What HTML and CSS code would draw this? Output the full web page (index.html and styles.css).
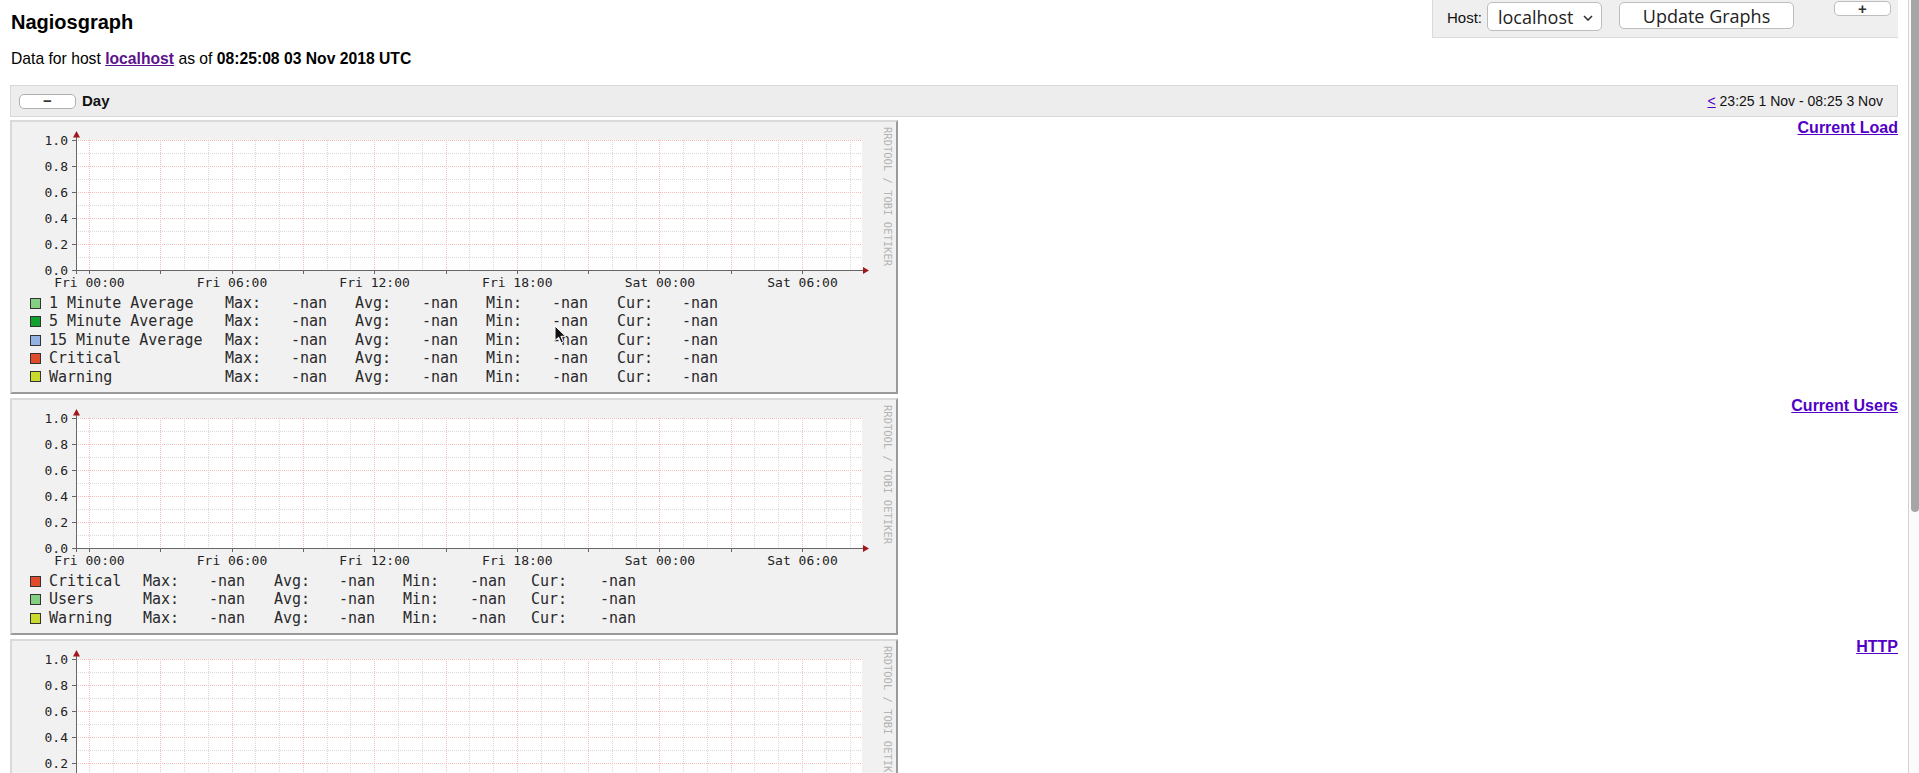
FILE: index.html
```html
<!DOCTYPE html>
<html lang="en">
<head>
<meta charset="utf-8">
<title>Nagiosgraph</title>
<link rel="stylesheet" href="styles.css">
</head>
<body>
<svg class="defs" width="0" height="0" aria-hidden="true">
  <defs>
    <symbol id="plotgrid" viewBox="0 0 884 170">
      <rect x="64" y="18" width="786" height="130" fill="#fff"/>
      <path class="grid-minor" d="M64 31.5H850M64 57.5H850M64 83.5H850M64 109.5H850M64 135.5H850M101.5 18V148M125.5 18V148M172.5 18V148M196.5 18V148M243.5 18V148M267.5 18V148M315.5 18V148M338.5 18V148M386.5 18V148M410.5 18V148M457.5 18V148M481.5 18V148M529.5 18V148M552.5 18V148M600.5 18V148M624.5 18V148M671.5 18V148M695.5 18V148M742.5 18V148M766.5 18V148M814.5 18V148M838.5 18V148"/>
      <path class="grid-major" d="M64 18.5H850M64 44.5H850M64 70.5H850M64 96.5H850M64 122.5H850M77.5 18V148M148.5 18V148M220.5 18V148M291.5 18V148M362.5 18V148M434.5 18V148M505.5 18V148M576.5 18V148M647.5 18V148M719.5 18V148M790.5 18V148"/>
      <path class="axis" d="M64.5 14V152M60 148.5H852M60 18.5H64M60 44.5H64M60 70.5H64M60 96.5H64M60 122.5H64M77.5 148V152M148.5 148V152M220.5 148V152M291.5 148V152M362.5 148V152M434.5 148V152M505.5 148V152M576.5 148V152M647.5 148V152M719.5 148V152M790.5 148V152"/>
      <path class="arrow" d="M64.5 9L61 15.5H68ZM857 148.5L851 145V152Z"/>
    </symbol>
  </defs>
</svg>

<header class="top">
  <div class="intro">
    <h1 class="title">Nagiosgraph</h1>
    <p class="summary">Data for host <a class="host-link" href="#">localhost</a> as of <b>08:25:08 03 Nov 2018 UTC</b></p>
  </div>
  <form class="controls">
    <label class="host-label">Host:</label>
    <button type="button" class="host-select">localhost
      <svg class="chev" width="10" height="6" viewBox="0 0 10 6"><path d="M1 1l4 4 4-4" fill="none" stroke="#333" stroke-width="1.6"/></svg>
    </button>
    <button type="button" class="update">Update Graphs</button>
    <button type="button" class="expand">+</button>
  </form>
</header>

<section class="period">
  <div class="period-bar">
    <button type="button" class="collapse">&minus;</button>
    <span class="period-name">Day</span>
    <span class="range"><a href="#" class="prev">&lt;</a> 23:25 1 Nov - 08:25 3 Nov</span>
  </div>

  <div class="graph-row">
    <div class="graph">
      <svg class="plot" width="884" height="170" viewBox="0 0 884 170">
        <use href="#plotgrid"/>
        <g class="ylab"><text x="56" y="22.8">1.0</text><text x="56" y="48.8">0.8</text><text x="56" y="74.8">0.6</text><text x="56" y="100.8">0.4</text><text x="56" y="126.8">0.2</text><text x="56" y="153">0.0</text></g>
        <g class="xlab"><text x="77.4" y="164.8">Fri 00:00</text><text x="220" y="164.8">Fri 06:00</text><text x="362.6" y="164.8">Fri 12:00</text><text x="505.3" y="164.8">Fri 18:00</text><text x="647.9" y="164.8">Sat 00:00</text><text x="790.5" y="164.8">Sat 06:00</text></g>
        <text class="brand" transform="translate(872 5) rotate(90)">RRDTOOL / TOBI OETIKER</text>
      </svg>
      <div class="legend legend-load">
        <div class="lg-row"><span class="sw sw-lgreen"></span><span>1 Minute Average</span><span>Max:</span><span>-nan</span><span>Avg:</span><span>-nan</span><span>Min:</span><span>-nan</span><span>Cur:</span><span>-nan</span></div>
        <div class="lg-row"><span class="sw sw-dgreen"></span><span>5 Minute Average</span><span>Max:</span><span>-nan</span><span>Avg:</span><span>-nan</span><span>Min:</span><span>-nan</span><span>Cur:</span><span>-nan</span></div>
        <div class="lg-row"><span class="sw sw-blue"></span><span>15 Minute Average</span><span>Max:</span><span>-nan</span><span>Avg:</span><span>-nan</span><span>Min:</span><span>-nan</span><span>Cur:</span><span>-nan</span></div>
        <div class="lg-row"><span class="sw sw-red"></span><span>Critical</span><span>Max:</span><span>-nan</span><span>Avg:</span><span>-nan</span><span>Min:</span><span>-nan</span><span>Cur:</span><span>-nan</span></div>
        <div class="lg-row"><span class="sw sw-yellow"></span><span>Warning</span><span>Max:</span><span>-nan</span><span>Avg:</span><span>-nan</span><span>Min:</span><span>-nan</span><span>Cur:</span><span>-nan</span></div>
      </div>
    </div>
    <a href="#" class="graph-title">Current Load</a>
  </div>

  <div class="graph-row">
    <div class="graph">
      <svg class="plot" width="884" height="170" viewBox="0 0 884 170">
        <use href="#plotgrid"/>
        <g class="ylab"><text x="56" y="22.8">1.0</text><text x="56" y="48.8">0.8</text><text x="56" y="74.8">0.6</text><text x="56" y="100.8">0.4</text><text x="56" y="126.8">0.2</text><text x="56" y="153">0.0</text></g>
        <g class="xlab"><text x="77.4" y="164.8">Fri 00:00</text><text x="220" y="164.8">Fri 06:00</text><text x="362.6" y="164.8">Fri 12:00</text><text x="505.3" y="164.8">Fri 18:00</text><text x="647.9" y="164.8">Sat 00:00</text><text x="790.5" y="164.8">Sat 06:00</text></g>
        <text class="brand" transform="translate(872 5) rotate(90)">RRDTOOL / TOBI OETIKER</text>
      </svg>
      <div class="legend legend-users">
        <div class="lg-row"><span class="sw sw-red"></span><span>Critical</span><span>Max:</span><span>-nan</span><span>Avg:</span><span>-nan</span><span>Min:</span><span>-nan</span><span>Cur:</span><span>-nan</span></div>
        <div class="lg-row"><span class="sw sw-lgreen"></span><span>Users</span><span>Max:</span><span>-nan</span><span>Avg:</span><span>-nan</span><span>Min:</span><span>-nan</span><span>Cur:</span><span>-nan</span></div>
        <div class="lg-row"><span class="sw sw-yellow"></span><span>Warning</span><span>Max:</span><span>-nan</span><span>Avg:</span><span>-nan</span><span>Min:</span><span>-nan</span><span>Cur:</span><span>-nan</span></div>
      </div>
    </div>
    <a href="#" class="graph-title">Current Users</a>
  </div>

  <div class="graph-row">
    <div class="graph graph-partial">
      <svg class="plot" width="884" height="170" viewBox="0 0 884 170">
        <use href="#plotgrid"/>
        <g class="ylab"><text x="56" y="22.8">1.0</text><text x="56" y="48.8">0.8</text><text x="56" y="74.8">0.6</text><text x="56" y="100.8">0.4</text><text x="56" y="126.8">0.2</text><text x="56" y="153">0.0</text></g>
        <text class="brand" transform="translate(872 5) rotate(90)">RRDTOOL / TOBI OETIKER</text>
      </svg>
    </div>
    <a href="#" class="graph-title">HTTP</a>
  </div>
</section>

<div class="scrollbar"><div class="thumb"></div></div>
<svg class="cursor" width="13" height="19" viewBox="0 0 13 19"><path d="M1 1V15.5L4.6 12.2L7.2 18L9.4 17L6.9 11.3H11.6Z" fill="#111" stroke="#fff" stroke-width="1"/></svg>
</body>
</html>
```

FILE: styles.css
```css
html,
body {
  height: 773px;
}

body {
  margin: 0 21px 0 10px;
  font-family: "Liberation Sans", Arial, sans-serif;
  color: #111;
  background: #fff;
  overflow: hidden;
}

.defs {
  position: absolute;
  width: 0;
  height: 0;
}

/* ---------- header ---------- */
.top {
  display: flex;
  justify-content: space-between;
  align-items: flex-start;
}

.intro {
  padding-top: 10px;
  padding-left: 1px;
}

.title {
  margin: 0;
  font-size: 20px;
  line-height: 24px;
  font-weight: bold;
  color: #000;
}

.summary {
  margin: 15px 0 0;
  font-size: 15.7px;
  line-height: 20px;
  color: #000;
}

.host-link {
  color: #5c128e;
  font-weight: bold;
}

.controls {
  display: flex;
  align-items: flex-start;
  box-sizing: border-box;
  height: 38px;
  margin: 0 -6px 0 0;
  padding: 1px 12px 0 14px;
  background: #efefef;
  border: 1px solid #dadada;
  border-top: 0;
}

.host-label {
  font-size: 15px;
  line-height: 18px;
  margin: 8px 5px 0 0;
  color: #111;
}

.host-select,
.update,
.expand {
  font-family: "Open Sans", "Noto Sans", sans-serif;
  background: #fff;
  border: 1px solid #bdbdbd;
  border-radius: 5px;
  color: #222;
  padding: 0;
  margin: 0;
}

.host-select {
  display: flex;
  align-items: center;
  justify-content: space-between;
  box-sizing: border-box;
  width: 115px;
  height: 29px;
  margin-top: 1px;
  padding: 0 8px 0 10px;
  font-size: 18px;
  line-height: 24px;
}

.chev {
  display: block;
  margin-top: 2px;
}

.update {
  box-sizing: border-box;
  width: 175px;
  height: 27px;
  margin: 1px 0 0 17px;
  font-size: 18px;
  line-height: 24px;
}

.expand {
  box-sizing: border-box;
  width: 57px;
  height: 15px;
  margin-left: 40px;
  font-family: "Liberation Sans", Arial, sans-serif;
  font-weight: bold;
  font-size: 15px;
  line-height: 12px;
  color: #333;
}

/* ---------- period bar ---------- */
.period-bar {
  display: flex;
  align-items: center;
  box-sizing: border-box;
  height: 32px;
  margin-top: 16px;
  margin-bottom: 3px;
  padding: 0 14px 0 8px;
  background: #eeedee;
  border: 1px solid #d9d9d9;
}

.collapse {
  box-sizing: border-box;
  width: 57px;
  height: 15px;
  padding: 0;
  margin: 0 6px 0 0;
  background: #fff;
  border: 1px solid #b0b0b0;
  border-radius: 5px;
  font-family: "Liberation Sans", Arial, sans-serif;
  font-weight: bold;
  font-size: 15px;
  line-height: 12px;
  color: #333;
}

.period-name {
  font-weight: bold;
  font-size: 15px;
  line-height: 18px;
}

.range {
  margin-left: auto;
  font-size: 14px;
  line-height: 18px;
  color: #111;
}

.prev {
  color: #5200c8;
}

/* ---------- graphs ---------- */
.graph-row {
  display: flex;
  justify-content: space-between;
  align-items: flex-start;
  margin-bottom: 4px;
}

.graph {
  box-sizing: border-box;
  width: 888px;
  border: 2px solid;
  border-color: #dadada #9a9a9a #9a9a9a #dadada;
  background: #f2f1f2;
  padding-bottom: 6px;
}

.graph-partial {
  padding-bottom: 0;
}

.plot {
  display: block;
}

.grid-minor {
  fill: none;
  stroke: #d9d9d9;
  stroke-width: 1;
  stroke-dasharray: 1 1;
  shape-rendering: crispEdges;
}

.grid-major {
  fill: none;
  stroke: #f4bcbc;
  stroke-width: 1;
  stroke-dasharray: 1 1;
  shape-rendering: crispEdges;
}

.axis {
  fill: none;
  stroke: #666;
  stroke-width: 1;
  shape-rendering: crispEdges;
}

.arrow {
  fill: #a3171b;
}

.ylab text {
  font-family: "DejaVu Sans Mono", monospace;
  font-size: 13px;
  fill: #222;
  text-anchor: end;
}

.xlab text {
  font-family: "DejaVu Sans Mono", monospace;
  font-size: 13px;
  fill: #222;
  text-anchor: middle;
}

.brand {
  font-family: "DejaVu Sans Mono", monospace;
  font-size: 10.5px;
  fill: #b4b4b4;
}

.legend {
  margin-top: 2px;
  padding-left: 18px;
  font-family: "DejaVu Sans Mono", monospace;
  font-size: 15px;
  line-height: 18.4px;
  color: #2a2a2a;
}

.lg-row {
  display: grid;
  align-items: center;
  white-space: pre;
}

.legend-load .lg-row {
  grid-template-columns: 19px 176px 66px 64px 67px 64px 66px 65px 65px auto;
}

.legend-users .lg-row {
  grid-template-columns: 19px 94px 66px 65px 65px 64px 67px 61px 69px auto;
}

.sw {
  box-sizing: border-box;
  width: 11px;
  height: 11px;
  border: 1px solid #333;
}

.sw-lgreen { background: #82d082; }
.sw-dgreen { background: #10a02c; }
.sw-blue { background: #92b3e2; }
.sw-red { background: #e04b2c; }
.sw-yellow { background: #cadb2e; }

.graph-title {
  margin-top: -1px;
  font-size: 16px;
  line-height: 18px;
  font-weight: bold;
  color: #5200c8;
}

/* ---------- overlays ---------- */
.scrollbar {
  position: fixed;
  top: 0;
  right: 0;
  width: 11px;
  height: 100%;
  box-sizing: border-box;
  border-left: 1px solid #d2d2d2;
  background: #fbfbfb;
}

.thumb {
  position: absolute;
  top: 0;
  left: 2px;
  width: 8px;
  height: 512px;
  border-radius: 0 0 4px 4px;
  background: #a6a6a6;
}

.cursor {
  position: fixed;
  left: 554px;
  top: 325px;
}
```
